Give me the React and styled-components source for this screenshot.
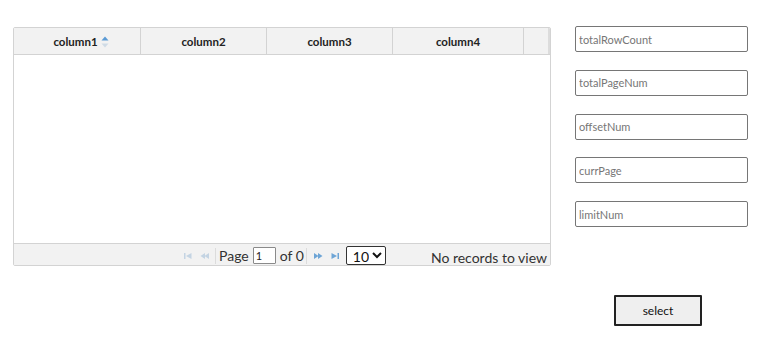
import React from 'react'
import styled, { createGlobalStyle } from 'styled-components'

const GlobalStyle = createGlobalStyle`
  html, body {
    margin: 0;
    padding: 0;
    background: #fff;
    font-family: Lato, 'Noto Sans', sans-serif;
  }
`

const columns = [
  { id: 1, name: 'column1', width: 127, sorted: true },
  { id: 2, name: 'column2', width: 126 },
  { id: 3, name: 'column3', width: 126 },
  { id: 4, name: 'column4', width: 131 },
]

const fields = ['totalRowCount', 'totalPageNum', 'offsetNum', 'currPage', 'limitNum']

const SortIcon = () => (
  <svg width='8' height='12' viewBox='0 0 8 12'>
    <path d='M4 0.5 L7.5 4.5 L0.5 4.5 Z' fill='#5b9bd5' />
    <path d='M4 11.5 L7.5 7.5 L0.5 7.5 Z' fill='#cfdbe6' />
  </svg>
)

const PagerIcon = ({ kind, active }) => {
  const c = active ? '#6ea5d6' : '#c4d4e3'
  if (kind === 'first')
    return (
      <svg width='10' height='8' viewBox='0 0 10 8'>
        <rect x='1' y='1' width='1.5' height='6' fill={c} />
        <path d='M3 4 L8.5 1 L8.5 7 Z' fill={c} />
      </svg>
    )
  if (kind === 'prev')
    return (
      <svg width='10' height='8' viewBox='0 0 10 8'>
        <path d='M0.5 4 L5 1 L5 7 Z' fill={c} />
        <path d='M4.5 4 L9 1 L9 7 Z' fill={c} />
      </svg>
    )
  if (kind === 'next')
    return (
      <svg width='10' height='8' viewBox='0 0 10 8'>
        <path d='M9.5 4 L5 1 L5 7 Z' fill={c} />
        <path d='M5.5 4 L1 1 L1 7 Z' fill={c} />
      </svg>
    )
  return (
    <svg width='10' height='8' viewBox='0 0 10 8'>
      <path d='M7 4 L1.5 1 L1.5 7 Z' fill={c} />
      <rect x='7.5' y='1' width='1.5' height='6' fill={c} />
    </svg>
  )
}

const App = () => {
  return (
    <>
      <GlobalStyle />
      <Page>
        <Top>
          <Grid>
            <HeaderRow>
              {columns.map((col) => (
                <HeaderCell key={col.id} $width={col.width} $sorted={col.sorted}>
                  {col.name}
                  {col.sorted && <SortIcon />}
                </HeaderCell>
              ))}
              <HeaderFiller />
            </HeaderRow>
            <Body />
            <Pager>
              <PagerCenter>
                <IconBtn><PagerIcon kind='first' /></IconBtn>
                <IconBtn><PagerIcon kind='prev' /></IconBtn>
                <Sep />
                <PagerText>Page</PagerText>
                <PageInput defaultValue='1' />
                <PagerText>of 0</PagerText>
                <Sep />
                <IconBtn><PagerIcon kind='next' active /></IconBtn>
                <IconBtn><PagerIcon kind='last' active /></IconBtn>
                <RowsSelect defaultValue='10'>
                  <option>10</option>
                  <option>20</option>
                  <option>30</option>
                </RowsSelect>
              </PagerCenter>
              <Records>No records to view</Records>
            </Pager>
          </Grid>
          <Side>
            {fields.map((f) => (
              <Field key={f} placeholder={f} />
            ))}
          </Side>
        </Top>
        <ButtonRow>
          <SelectButton type='button'>select</SelectButton>
        </ButtonRow>
      </Page>
    </>
  )
}

const Page = styled.div`
  width: 761px;
  height: 338px;
  padding: 26px 0 0 13px;
  box-sizing: border-box;
`

const Top = styled.div`
  display: flex;
  align-items: flex-start;
  gap: 24px;
`

const Grid = styled.div`
  width: 538px;
  margin-top: 1px;
  border: 1px solid #d3d3d3;
  border-radius: 2px;
  display: flex;
  flex-direction: column;
  box-sizing: border-box;
  overflow: hidden;
`

const HeaderRow = styled.div`
  display: flex;
  height: 26px;
  background: #f2f2f2;
  border-bottom: 1px solid #d3d3d3;
`

const HeaderCell = styled.div`
  width: ${(p) => p.$width}px;
  flex: none;
  display: flex;
  align-items: center;
  justify-content: center;
  gap: 3px;
  padding-left: ${(p) => (p.$sorted ? 8 : 0)}px;
  padding-top: 1px;
  font-size: 11.5px;
  font-weight: 700;
  color: #222;
  border-right: 1px solid #d3d3d3;
  box-sizing: border-box;
`

const HeaderFiller = styled.div`
  flex: 1;
  border-right: 2px solid #dcdcdc;
`

const Body = styled.div`
  height: 188px;
  background: #fff;
`

const Pager = styled.div`
  height: 21px;
  background: #f2f2f2;
  border-top: 1px solid #d3d3d3;
  display: flex;
  align-items: center;
  position: relative;
`

const PagerCenter = styled.div`
  position: absolute;
  left: 165px;
  top: 2px;
  display: flex;
  align-items: center;
  height: 19px;
`

const IconBtn = styled.span`
  display: inline-flex;
  align-items: center;
  justify-content: center;
  width: 17px;
  height: 18px;
`

const Sep = styled.span`
  width: 1px;
  height: 16px;
  background: #dcdcdc;
  margin: 0 3px 0 2px;
`

const PagerText = styled.span`
  font-size: 14px;
  color: #333;
  line-height: 18px;
`

const PageInput = styled.input`
  width: 23px;
  height: 17px;
  box-sizing: border-box;
  margin: 0 4px;
  padding: 0 2px;
  border: 1px solid #8a8a8a;
  border-radius: 1px;
  font-size: 11px;
  font-family: inherit;
  color: #222;
  outline: none;
`

const RowsSelect = styled.select`
  margin-left: 2px;
  width: 40px;
  height: 19px;
  box-sizing: border-box;
  border: 1px solid #333;
  border-radius: 2px;
  background: #fff;
  font-size: 14px;
  line-height: 17px;
  font-family: inherit;
  color: #111;
  padding: 0 0 0 2px;
`

const Records = styled.span`
  margin-left: auto;
  margin-right: 3px;
  margin-top: 5px;
  font-size: 14px;
  color: #333;
`

const Side = styled.div`
  display: flex;
  flex-direction: column;
  gap: 17.75px;
`

const Field = styled.input`
  width: 173px;
  height: 26px;
  box-sizing: border-box;
  border: 1px solid #767676;
  border-radius: 2px;
  padding: 0 3px;
  font-size: 11px;
  font-family: inherit;
  outline: none;
  &::placeholder {
    color: #767676;
  }
`

const ButtonRow = styled.div`
  display: flex;
  padding-left: 601px;
  margin-top: 29px;
`

const SelectButton = styled.button`
  width: 88px;
  height: 31px;
  background: #efefef;
  border: 2px solid #222;
  border-radius: 1px;
  font-size: 12px;
  font-family: inherit;
  color: #111;
`

export default App
